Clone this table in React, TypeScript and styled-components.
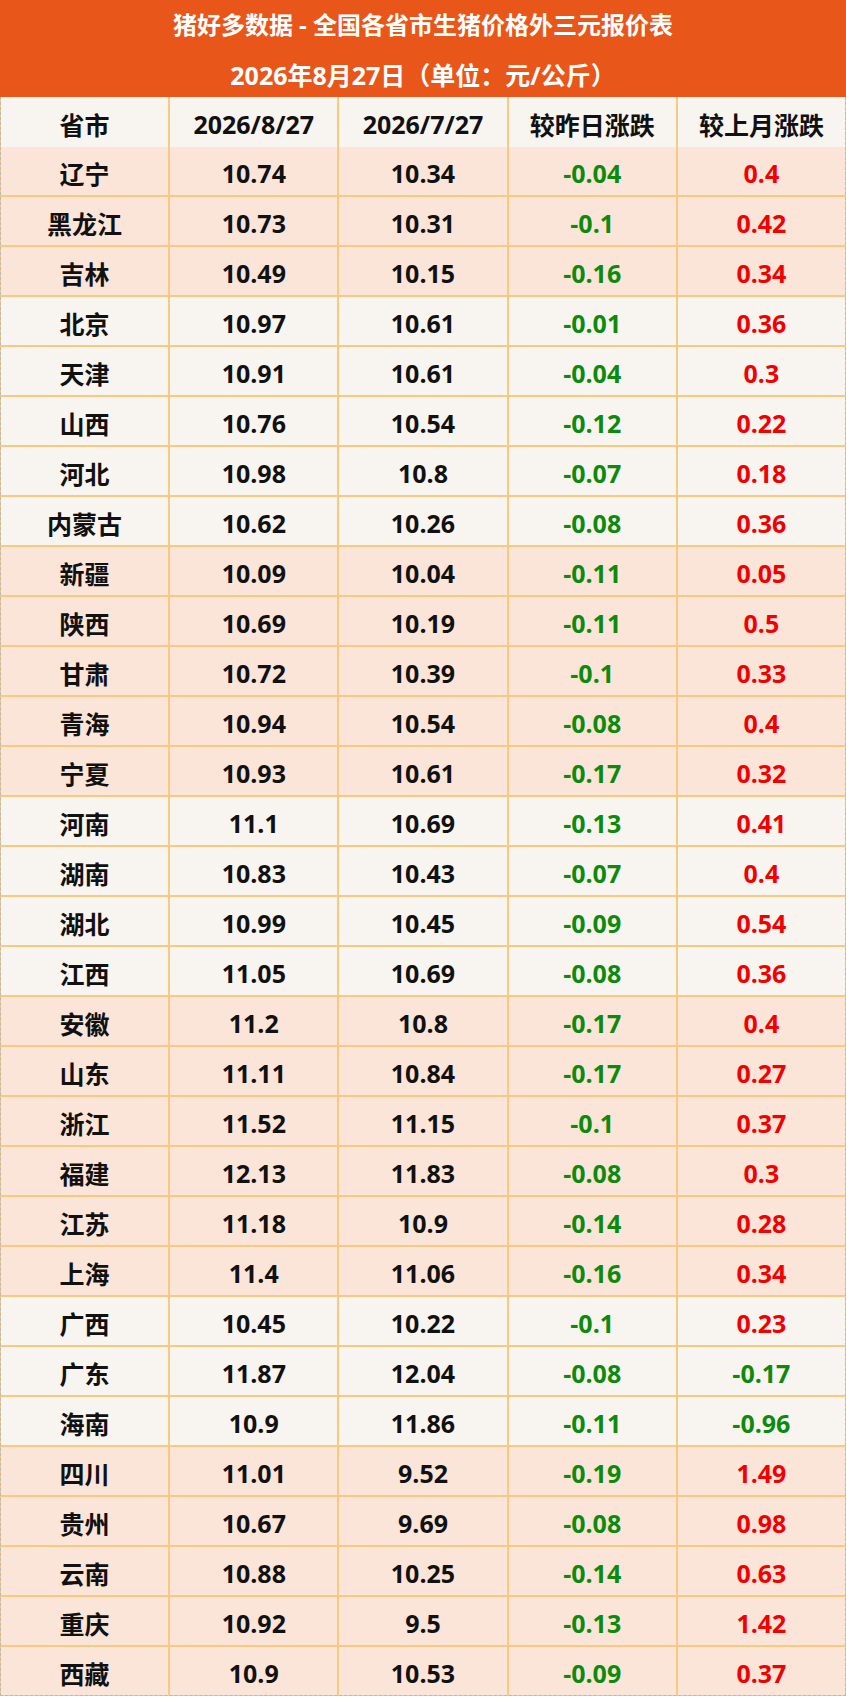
import React from 'react';
import styled, { createGlobalStyle } from 'styled-components';

const GlobalStyle = createGlobalStyle`
    body {
        margin: 0;
        background: #ffffff;
        font-family: "Open Sans", "Noto Sans CJK SC", sans-serif;
    }
`;

type Region = 'peach' | 'light';

interface PriceRow {
    name: string;
    today: string;
    lastMonth: string;
    dayChange: string;
    monthChange: string;
    region: Region;
}

const rows: PriceRow[] = [
    { name: '辽宁', today: '10.74', lastMonth: '10.34', dayChange: '-0.04', monthChange: '0.4', region: 'peach' },
    { name: '黑龙江', today: '10.73', lastMonth: '10.31', dayChange: '-0.1', monthChange: '0.42', region: 'peach' },
    { name: '吉林', today: '10.49', lastMonth: '10.15', dayChange: '-0.16', monthChange: '0.34', region: 'peach' },
    { name: '北京', today: '10.97', lastMonth: '10.61', dayChange: '-0.01', monthChange: '0.36', region: 'light' },
    { name: '天津', today: '10.91', lastMonth: '10.61', dayChange: '-0.04', monthChange: '0.3', region: 'light' },
    { name: '山西', today: '10.76', lastMonth: '10.54', dayChange: '-0.12', monthChange: '0.22', region: 'light' },
    { name: '河北', today: '10.98', lastMonth: '10.8', dayChange: '-0.07', monthChange: '0.18', region: 'light' },
    { name: '内蒙古', today: '10.62', lastMonth: '10.26', dayChange: '-0.08', monthChange: '0.36', region: 'light' },
    { name: '新疆', today: '10.09', lastMonth: '10.04', dayChange: '-0.11', monthChange: '0.05', region: 'peach' },
    { name: '陕西', today: '10.69', lastMonth: '10.19', dayChange: '-0.11', monthChange: '0.5', region: 'peach' },
    { name: '甘肃', today: '10.72', lastMonth: '10.39', dayChange: '-0.1', monthChange: '0.33', region: 'peach' },
    { name: '青海', today: '10.94', lastMonth: '10.54', dayChange: '-0.08', monthChange: '0.4', region: 'peach' },
    { name: '宁夏', today: '10.93', lastMonth: '10.61', dayChange: '-0.17', monthChange: '0.32', region: 'peach' },
    { name: '河南', today: '11.1', lastMonth: '10.69', dayChange: '-0.13', monthChange: '0.41', region: 'light' },
    { name: '湖南', today: '10.83', lastMonth: '10.43', dayChange: '-0.07', monthChange: '0.4', region: 'light' },
    { name: '湖北', today: '10.99', lastMonth: '10.45', dayChange: '-0.09', monthChange: '0.54', region: 'light' },
    { name: '江西', today: '11.05', lastMonth: '10.69', dayChange: '-0.08', monthChange: '0.36', region: 'light' },
    { name: '安徽', today: '11.2', lastMonth: '10.8', dayChange: '-0.17', monthChange: '0.4', region: 'peach' },
    { name: '山东', today: '11.11', lastMonth: '10.84', dayChange: '-0.17', monthChange: '0.27', region: 'peach' },
    { name: '浙江', today: '11.52', lastMonth: '11.15', dayChange: '-0.1', monthChange: '0.37', region: 'peach' },
    { name: '福建', today: '12.13', lastMonth: '11.83', dayChange: '-0.08', monthChange: '0.3', region: 'peach' },
    { name: '江苏', today: '11.18', lastMonth: '10.9', dayChange: '-0.14', monthChange: '0.28', region: 'peach' },
    { name: '上海', today: '11.4', lastMonth: '11.06', dayChange: '-0.16', monthChange: '0.34', region: 'peach' },
    { name: '广西', today: '10.45', lastMonth: '10.22', dayChange: '-0.1', monthChange: '0.23', region: 'light' },
    { name: '广东', today: '11.87', lastMonth: '12.04', dayChange: '-0.08', monthChange: '-0.17', region: 'light' },
    { name: '海南', today: '10.9', lastMonth: '11.86', dayChange: '-0.11', monthChange: '-0.96', region: 'light' },
    { name: '四川', today: '11.01', lastMonth: '9.52', dayChange: '-0.19', monthChange: '1.49', region: 'peach' },
    { name: '贵州', today: '10.67', lastMonth: '9.69', dayChange: '-0.08', monthChange: '0.98', region: 'peach' },
    { name: '云南', today: '10.88', lastMonth: '10.25', dayChange: '-0.14', monthChange: '0.63', region: 'peach' },
    { name: '重庆', today: '10.92', lastMonth: '9.5', dayChange: '-0.13', monthChange: '1.42', region: 'peach' },
    { name: '西藏', today: '10.9', lastMonth: '10.53', dayChange: '-0.09', monthChange: '0.37', region: 'peach' },
];

const headers = ['省市', '2026/8/27', '2026/7/27', '较昨日涨跌', '较上月涨跌'];

const Page = styled.div`
    width: 846px;
    box-sizing: border-box;
`;

const Banner = styled.header`
    height: 97px;
    background: #e9561a;
    color: #ffffff;
    display: flex;
    flex-direction: column;
    align-items: center;
    font-weight: 700;
    font-family: "Open Sans", "Noto Sans CJK SC", sans-serif;
`;

const BannerLine = styled.div<{ size: number }>`
    height: 50px;
    line-height: 50px;
    font-size: ${props => props.size}px;
    white-space: nowrap;
`;

const Grid = styled.div`
    display: grid;
    grid-template-columns: repeat(5, 1fr);
    grid-auto-rows: 48px;
    column-gap: 2px;
    row-gap: 2px;
    background: #f9c97f;
    border: 1px dashed #b9b9b9;
    border-top: none;
`;

const Cell = styled.div<{ tone: Region }>`
    display: flex;
    align-items: center;
    justify-content: center;
    padding-top: 3px;
    box-sizing: border-box;
    background: ${props => (props.tone === 'peach' ? '#fbe4d8' : '#f8f4f0')};
    color: #111111;
    font-size: 25px;
    font-weight: 700;
    white-space: nowrap;
`;

const HeadCell = styled(Cell)`
    height: 51px;
    margin-bottom: -1px;
`;

const Change = styled.span<{ negative: boolean }>`
    color: ${props => (props.negative ? '#0b8a0b' : '#f20000')};
`;

const App: React.FC = () => {
    return (
        <Page>
            <GlobalStyle />
            <Banner>
                <BannerLine size={24}>猪好多数据 - 全国各省市生猪价格外三元报价表</BannerLine>
                <BannerLine size={25}>2026年8月27日（单位：元/公斤）</BannerLine>
            </Banner>
            <Grid>
                {headers.map(h => (
                    <HeadCell key={h} tone="light">
                        {h}
                    </HeadCell>
                ))}
                {rows.map(row => (
                    <React.Fragment key={row.name}>
                        <Cell tone={row.region}>{row.name}</Cell>
                        <Cell tone={row.region}>{row.today}</Cell>
                        <Cell tone={row.region}>{row.lastMonth}</Cell>
                        <Cell tone={row.region}>
                            <Change negative={row.dayChange.startsWith('-')}>{row.dayChange}</Change>
                        </Cell>
                        <Cell tone={row.region}>
                            <Change negative={row.monthChange.startsWith('-')}>{row.monthChange}</Change>
                        </Cell>
                    </React.Fragment>
                ))}
            </Grid>
        </Page>
    );
};

export default App;
